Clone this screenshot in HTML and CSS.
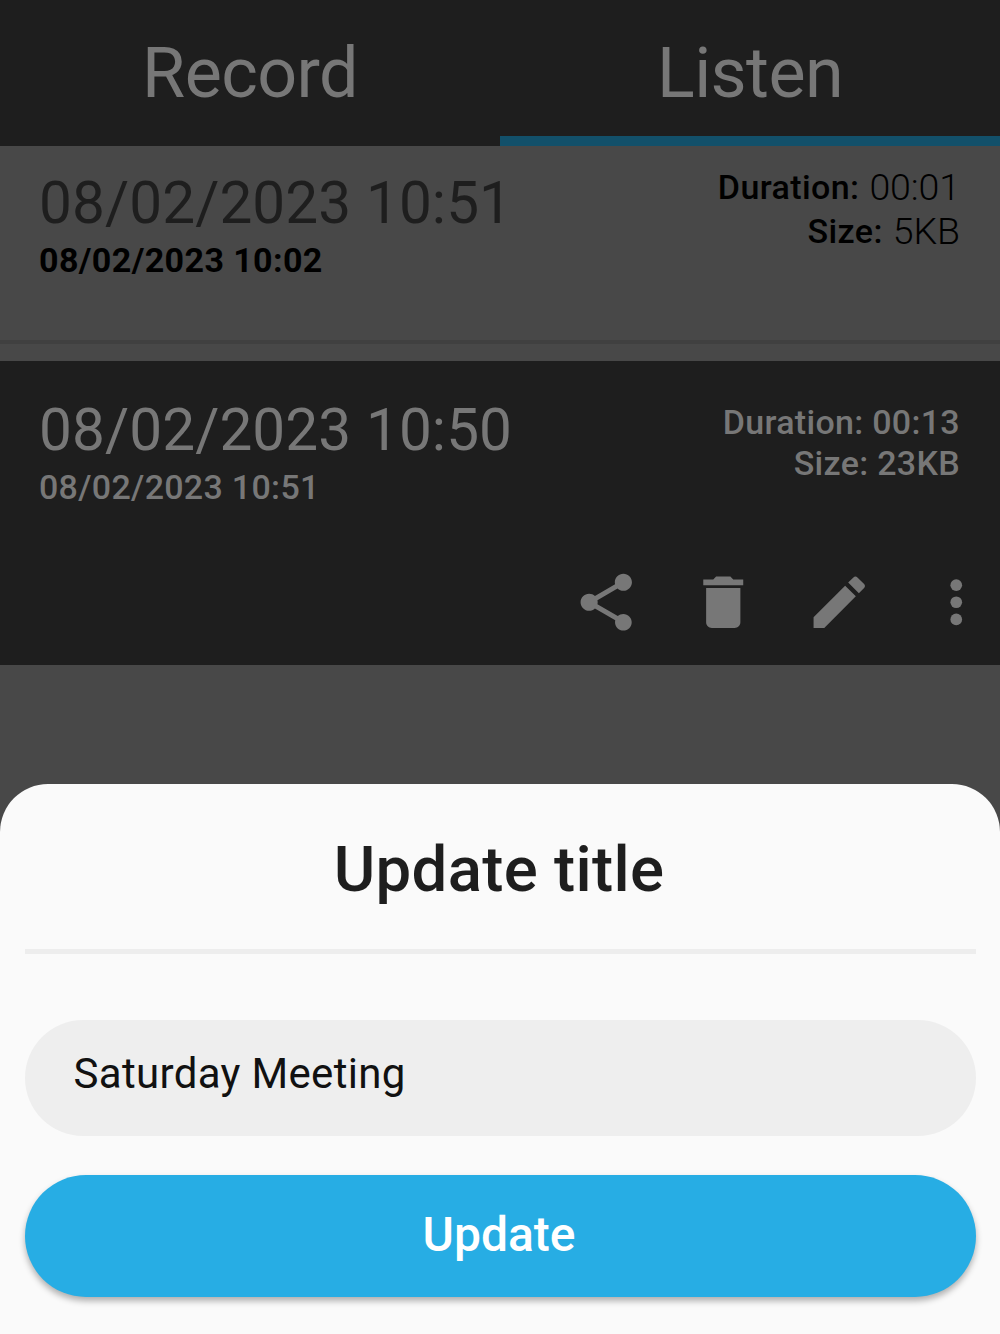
FILE: index.html
```html
<!DOCTYPE html>
<html lang="en">
<head>
    <meta charset="UTF-8">
    <title>Recorder</title>
    <link rel="stylesheet" href="styles.css">
</head>
<body>
    <div class="screen">

        <nav class="tabs">
            <div class="tab">Record</div>
            <div class="tab active">Listen</div>
        </nav>

        <main class="recordings">
            <section class="item">
                <div class="info">
                    <div class="name">08/02/2023 10:51</div>
                    <div class="date">08/02/2023 10:02</div>
                </div>
                <div class="meta">
                    <div class="row"><b>Duration:</b> <span class="value">00:01</span></div>
                    <div class="row"><b>Size:</b> <span class="value">5KB</span></div>
                </div>
            </section>

            <section class="item selected">
                <div class="info">
                    <div class="name">08/02/2023 10:50</div>
                    <div class="date">08/02/2023 10:51</div>
                </div>
                <div class="meta">
                    <div class="row">Duration: 00:13</div>
                    <div class="row">Size: 23KB</div>
                </div>
                <div class="actions">
                    <svg class="icon" viewBox="0 0 24 24"><path d="M18 16.08c-.76 0-1.44.3-1.96.77L8.91 12.7c.05-.23.09-.46.09-.7s-.04-.47-.09-.7l7.05-4.11c.54.5 1.25.81 2.04.81 1.66 0 3-1.34 3-3s-1.34-3-3-3-3 1.34-3 3c0 .24.04.47.09.7L8.04 9.81C7.5 9.31 6.79 9 6 9c-1.66 0-3 1.34-3 3s1.34 3 3 3c.79 0 1.5-.31 2.04-.81l7.12 4.16c-.05.21-.08.43-.08.65 0 1.61 1.31 2.92 2.92 2.92s2.92-1.31 2.92-2.92-1.31-2.92-2.92-2.92z"/></svg>
                    <svg class="icon" viewBox="0 0 24 24"><path d="M6 19c0 1.1.9 2 2 2h8c1.1 0 2-.9 2-2V7H6v12zM19 4h-3.500l-1-1h-5l-1 1H5v2h14V4z"/></svg>
                    <svg class="icon" viewBox="0 0 24 24"><path d="M3 17.25V21h3.750L17.810 9.940l-3.750-3.750L3 17.250zM20.710 7.040c.39-.39.39-1.020 0-1.410l-2.340-2.340c-.39-.39-1.020-.39-1.410 0l-1.830 1.830 3.750 3.750 1.830-1.830z"/></svg>
                    <svg class="icon" viewBox="0 0 24 24"><circle cx="12" cy="6" r="2.050"/><circle cx="12" cy="12" r="2.050"/><circle cx="12" cy="18" r="2.050"/></svg>
                </div>
            </section>
        </main>

        <form class="sheet">
            <h2 class="title">Update title</h2>
            <input class="field" type="text" value="Saturday Meeting">
            <button class="submit" type="button">Update</button>
        </form>

    </div>
</body>
</html>
```
FILE: styles.css
```css
* {
    box-sizing: border-box;
    font-family: Roboto, sans-serif;
}

body {
    margin: 0;
    background: #484848;
}

.screen {
    display: flex;
    flex-direction: column;
    height: 1334px;
    overflow: hidden;
}

/* tabs */
.tabs {
    display: flex;
    height: 146px;
    background: #1e1e1e;
}

.tab {
    flex: 1;
    height: 146px;
    line-height: 147px;
    text-align: center;
    font-size: 70px;
    letter-spacing: -0.6px;
    color: #777;
}

.tab.active {
    border-bottom: 10px solid #12506a;
}

/* recordings list */
.recordings {
    flex: 1;
}

.item {
    display: flex;
    flex-wrap: wrap;
    justify-content: space-between;
    align-content: flex-start;
    height: 198px;
    padding: 23px 40px 0 39px;
    border-bottom: 4px solid #404040;
    color: #000;
}

.name {
    font-size: 58.5px;
    line-height: 68px;
    letter-spacing: 0.1px;
    color: #1e1e1e;
}

.date {
    font-size: 34px;
    line-height: 47px;
    letter-spacing: 0.4px;
    font-weight: 700;
}

.meta {
    margin-top: -4px;
    font-size: 34px;
}

.row {
    display: flex;
    justify-content: flex-end;
    align-items: center;
    gap: 10px;
    height: 44px;
}

.row b {
    letter-spacing: 0.4px;
    margin-top: -1px;
    font-weight: 500;
}

.value {
    font-size: 37.5px;
    font-weight: 350;
    letter-spacing: -0.1px;
}

.selected {
    height: 304px;
    margin-top: 17px;
    padding-top: 35px;
    border-bottom: none;
    background: #1e1e1e;
    color: #777;
}

.selected .name {
    color: #777;
}

.selected .date {
    letter-spacing: 0.3px;
    font-weight: 500;
}

.selected .meta {
    margin-top: 5px;
    letter-spacing: 0.3px;
    font-weight: 500;
}

.selected .row {
    height: 41px;
}

.actions {
    display: flex;
    justify-content: flex-end;
    gap: 48px;
    flex: 0 0 calc(100% + 30px);
    margin: 57px -30px 0 0;
}

.icon {
    width: 68.5px;
    height: 68.5px;
    fill: #777;
}

/* bottom sheet */
.sheet {
    display: flex;
    flex-direction: column;
    height: 550.5px;
    padding: 0 24.5px;
    border-radius: 48px 48px 0 0;
    background: #fafafa;
}

.title {
    height: 170.5px;
    margin: 0 0 66px;
    padding-right: 2px;
    border-bottom: 5px solid #ededed;
    line-height: 171px;
    text-align: center;
    font-size: 63.5px;
    letter-spacing: 0.3px;
    font-weight: 500;
    color: #1e1e1e;
}

.field {
    height: 116px;
    padding: 0 49px 10px;
    border: none;
    border-radius: 58px;
    outline: none;
    background: #eee;
    font-size: 42px;
    letter-spacing: 0.33px;
    color: #111;
}

.submit {
    height: 122px;
    margin-top: 39px;
    padding: 0 8px 3px 6px;
    border: none;
    border-radius: 61px;
    background: #27ade4;
    box-shadow: 0 4px 6px rgba(0, 0, 0, 0.3);
    font-size: 48px;
    font-weight: 500;
    color: #fff;
}
```
